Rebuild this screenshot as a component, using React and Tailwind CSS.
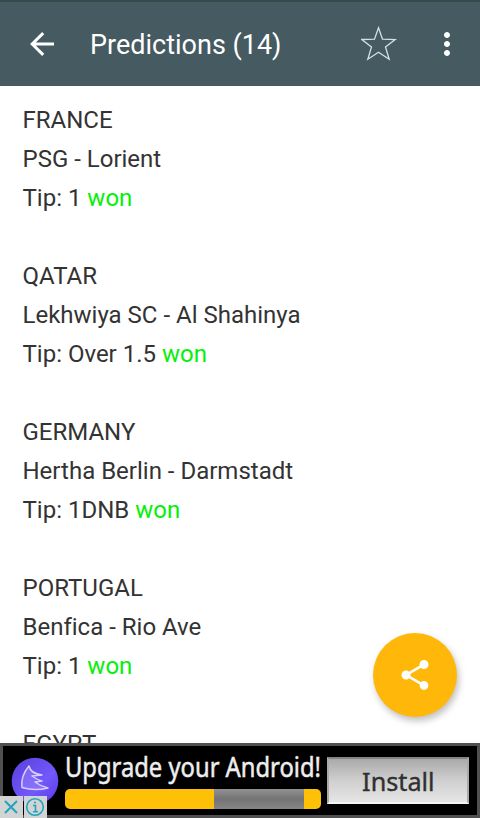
import { MdMoreVert, MdShare } from 'react-icons/md';

const predictions = [
  { country: 'FRANCE', match: 'PSG - Lorient', tip: '1', result: 'won' },
  { country: 'QATAR', match: 'Lekhwiya SC - Al Shahinya', tip: 'Over 1.5', result: 'won' },
  { country: 'GERMANY', match: 'Hertha Berlin - Darmstadt', tip: '1DNB', result: 'won' },
  { country: 'PORTUGAL', match: 'Benfica - Rio Ave', tip: '1', result: 'won' },
  { country: 'EGYPT' },
];

function Header() {
  return (
    <header className="h-[86px] shrink-0 flex items-center bg-[#455a61] border-t-2 border-[#344a4b] text-white pl-6 pr-[15px]">
      <button aria-label="Back" className="w-9 h-9">
        <svg viewBox="0 0 36 36" className="w-9 h-9" fill="none" stroke="currentColor" strokeWidth="3">
          <path d="M30 18H8M19.2 7.1 8.2 18l11 10.9" />
        </svg>
      </button>
      <h1 className="ml-[30px] flex-1 pt-[2px] text-[27px] leading-9 whitespace-nowrap">Predictions (14)</h1>
      <button aria-label="Favorite" className="w-9 h-9 mr-[32px]">
        <svg viewBox="0 0 36 36" className="w-9 h-9" fill="none" stroke="#d3e0e6" strokeWidth="1.3">
          <path d="M17.5 1.8 21.5 13.2 34.2 13.5 24.5 21 28.2 33.2 17.5 26.2 6.8 33.2 10.5 21 .8 13.5 13.5 13.2Z" />
        </svg>
      </button>
      <button aria-label="More options" className="w-9 h-9">
        <MdMoreVert className="w-9 h-9" />
      </button>
    </header>
  );
}

function Prediction({ item }) {
  return (
    <div className="mb-[39px]">
      <p>{item.country}</p>
      {item.match && <p>{item.match}</p>}
      {item.tip && (
        <p>
          Tip: {item.tip} <span className="text-[#05f00a]">{item.result}</span>
        </p>
      )}
    </div>
  );
}

function AdBanner() {
  return (
    <div className="relative h-[75px] shrink-0 flex bg-black border-[3px] border-[#505050] font-['Noto_Sans',sans-serif]">
      <svg viewBox="0 0 48 48" className="w-12 h-12 ml-[8px] mt-[11px] shrink-0">
        <defs>
          <linearGradient id="orb" x1="0" y1="0" x2="1" y2="1">
            <stop offset="0" stopColor="#5a3fdc" />
            <stop offset="0.6" stopColor="#7358fa" />
            <stop offset="1" stopColor="#5a35e8" />
          </linearGradient>
        </defs>
        <circle cx="24" cy="24" r="23.3" fill="url(#orb)" />
        <path
          d="M18 9C12 16 10 23 11 30.500C19 33 29 33 37 31C32 30 28 28 24 25L31 24C27 23 24 21 21 19L31 18C23 17 19 14 18 9Z"
          fill="#b8a8ff"
          fillOpacity="0.3"
          stroke="#d8ceff"
          strokeWidth="1.5"
          strokeLinejoin="round"
        />
      </svg>
      <div className="ml-[6px] mt-[7px] w-[258px] shrink-0">
        <p className="h-9 leading-[28px] text-[27px] text-[#eeeeee] whitespace-nowrap origin-left scale-x-[0.88] [-webkit-text-stroke:0.5px_#eeeeee]">
          Upgrade your Android!
        </p>
        <div className="flex h-5 w-[256px] rounded-[5px] overflow-hidden bg-[#ffc107]">
          <div className="ml-[149px] w-[90px] bg-linear-to-b from-[#929292] via-[#747474] to-[#868686]" />
        </div>
      </div>
      <button className="ml-[4px] mt-[11px] w-[142px] h-[47px] shrink-0 border-2 border-t-[#858585] border-x-[#aaaaaa] border-b-[#f4f4f4] bg-linear-to-b from-[#aaaaaa] via-[#cfcfcf] to-[#e6e6e6] text-[#303030] text-[26px] leading-none">
        <span className="inline-block scale-x-[0.97] [-webkit-text-stroke:0.4px_#303030]">Install</span>
      </button>
      <div className="absolute -left-[3px] -bottom-[3px] flex gap-[1px]">
        <svg viewBox="0 0 23 22" className="w-[23px] h-[22px] bg-[#d2d4d4]" fill="none" stroke="#20a5bd" strokeWidth="2">
          <path d="m5 5 12 12M17 5 5 17" />
        </svg>
        <svg viewBox="0 0 23 22" className="w-[23px] h-[22px] bg-[#d2d4d4]" fill="none" stroke="#20a5bd" strokeWidth="1.6">
          <circle cx="11" cy="11" r="8.3" />
          <path d="M9 9.500h2.500v6M9 15.700h5M10 6.500h2" />
        </svg>
      </div>
    </div>
  );
}

export default function App() {
  return (
    <div className="relative w-[480px] h-[818px] flex flex-col overflow-hidden bg-white font-[Roboto,sans-serif]">
      <Header />
      <main className="flex-1 min-h-0 overflow-hidden pl-[22.5px] pr-5 pt-[15px] text-[24px] leading-[39px] text-[#333333] [font-variant-ligatures:none]">
        {predictions.map((item) => (
          <Prediction key={item.country} item={item} />
        ))}
      </main>
      <AdBanner />
      <button
        aria-label="Share"
        className="absolute right-[23px] bottom-[101px] w-[84px] h-[84px] rounded-full bg-[#ffb70a] text-white flex items-center justify-center shadow-[2px_4px_7px_rgba(0,0,0,0.25)]"
      >
        <MdShare className="w-9 h-9" />
      </button>
    </div>
  );
}
